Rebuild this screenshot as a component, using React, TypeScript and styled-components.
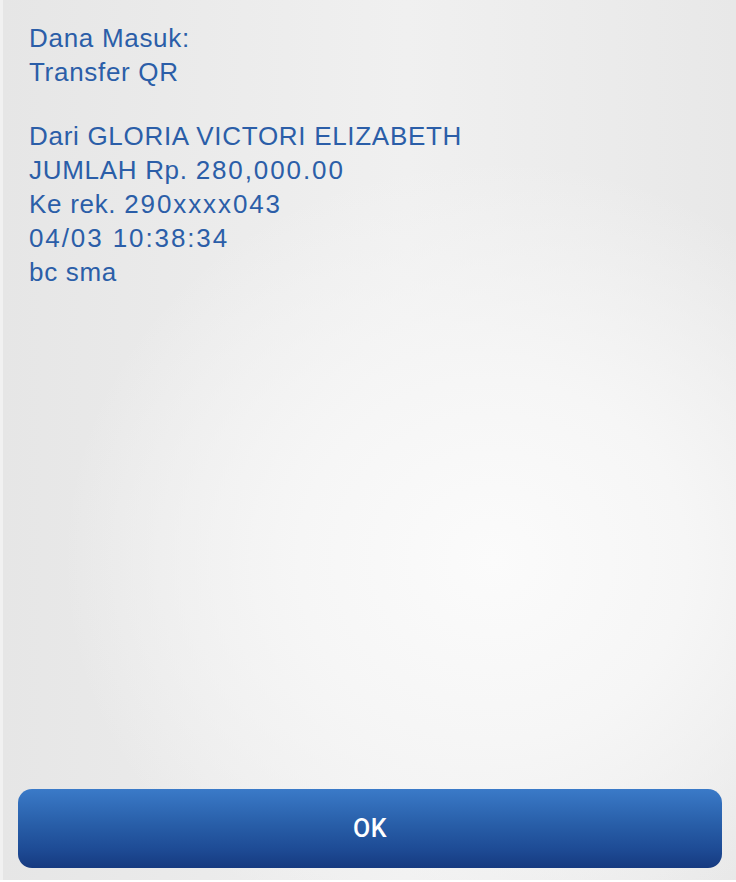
import React from "react";
import styled, { createGlobalStyle } from "styled-components";

const Global = createGlobalStyle`
  html, body { margin: 0; padding: 0; }
  body { width: 736px; height: 882px; overflow: hidden; background: #ffffff; }
`;

const Screen = styled.div`
  box-sizing: border-box;
  width: 736px;
  height: 882px;
  display: flex;
  padding: 0 0 2px 0;
  background: #ffffff;
`;

const EdgeStrip = styled.div`
  width: 3px;
  background: #f1f1f1;
`;

const Panel = styled.div`
  flex: 1;
  display: flex;
  flex-direction: column;
  justify-content: space-between;
  padding: 21px 11px 12px 26px;
  background:
    radial-gradient(ellipse 430px 400px at 490px 560px, #fbfbfb 0%, #f6f6f6 45%, rgba(240,240,240,0) 100%),
    linear-gradient(90deg, #e6e6e6 0%, #f0f0f0 55%, #e8e8e8 100%);
`;

const Message = styled.div`
  font-family: "Liberation Sans", Arial, sans-serif;
  font-size: 26px;
  line-height: 34px;
  letter-spacing: 0.7px;
  color: #2b5ea8;
`;

const Line = styled.div<{ $gap?: boolean }>`
  margin-top: ${(p) => (p.$gap ? "30px" : "0")};
`;

const Num = styled.span`
  letter-spacing: 1.9px;
`;

const OkButton = styled.button`
  box-sizing: border-box;
  margin-left: -11px;
  width: 704px;
  height: 79px;
  border: none;
  border-radius: 14px;
  background: linear-gradient(180deg, #3a7ac8 0%, #285ea8 45%, #1e4c96 75%, #163a80 100%);
  color: #ffffff;
  font-family: Roboto, "Liberation Sans", Arial, sans-serif;
  font-weight: 500;
  font-size: 25px;
  letter-spacing: 0.5px;
  display: flex;
  align-items: center;
  justify-content: center;
  cursor: pointer;
`;

export default function App() {
  return (
    <>
      <Global />
      <Screen>
        <EdgeStrip />
        <Panel>
          <Message>
            <Line>Dana Masuk:</Line>
            <Line>Transfer QR</Line>
            <Line $gap>Dari GLORIA VICTORI ELIZABETH</Line>
            <Line>JUMLAH Rp. <Num>280,000.00</Num></Line>
            <Line>Ke rek. <Num>290xxxx043</Num></Line>
            <Line><Num>04/03 10:38:34</Num></Line>
            <Line>bc sma</Line>
          </Message>
          <OkButton>OK</OkButton>
        </Panel>
      </Screen>
    </>
  );
}
